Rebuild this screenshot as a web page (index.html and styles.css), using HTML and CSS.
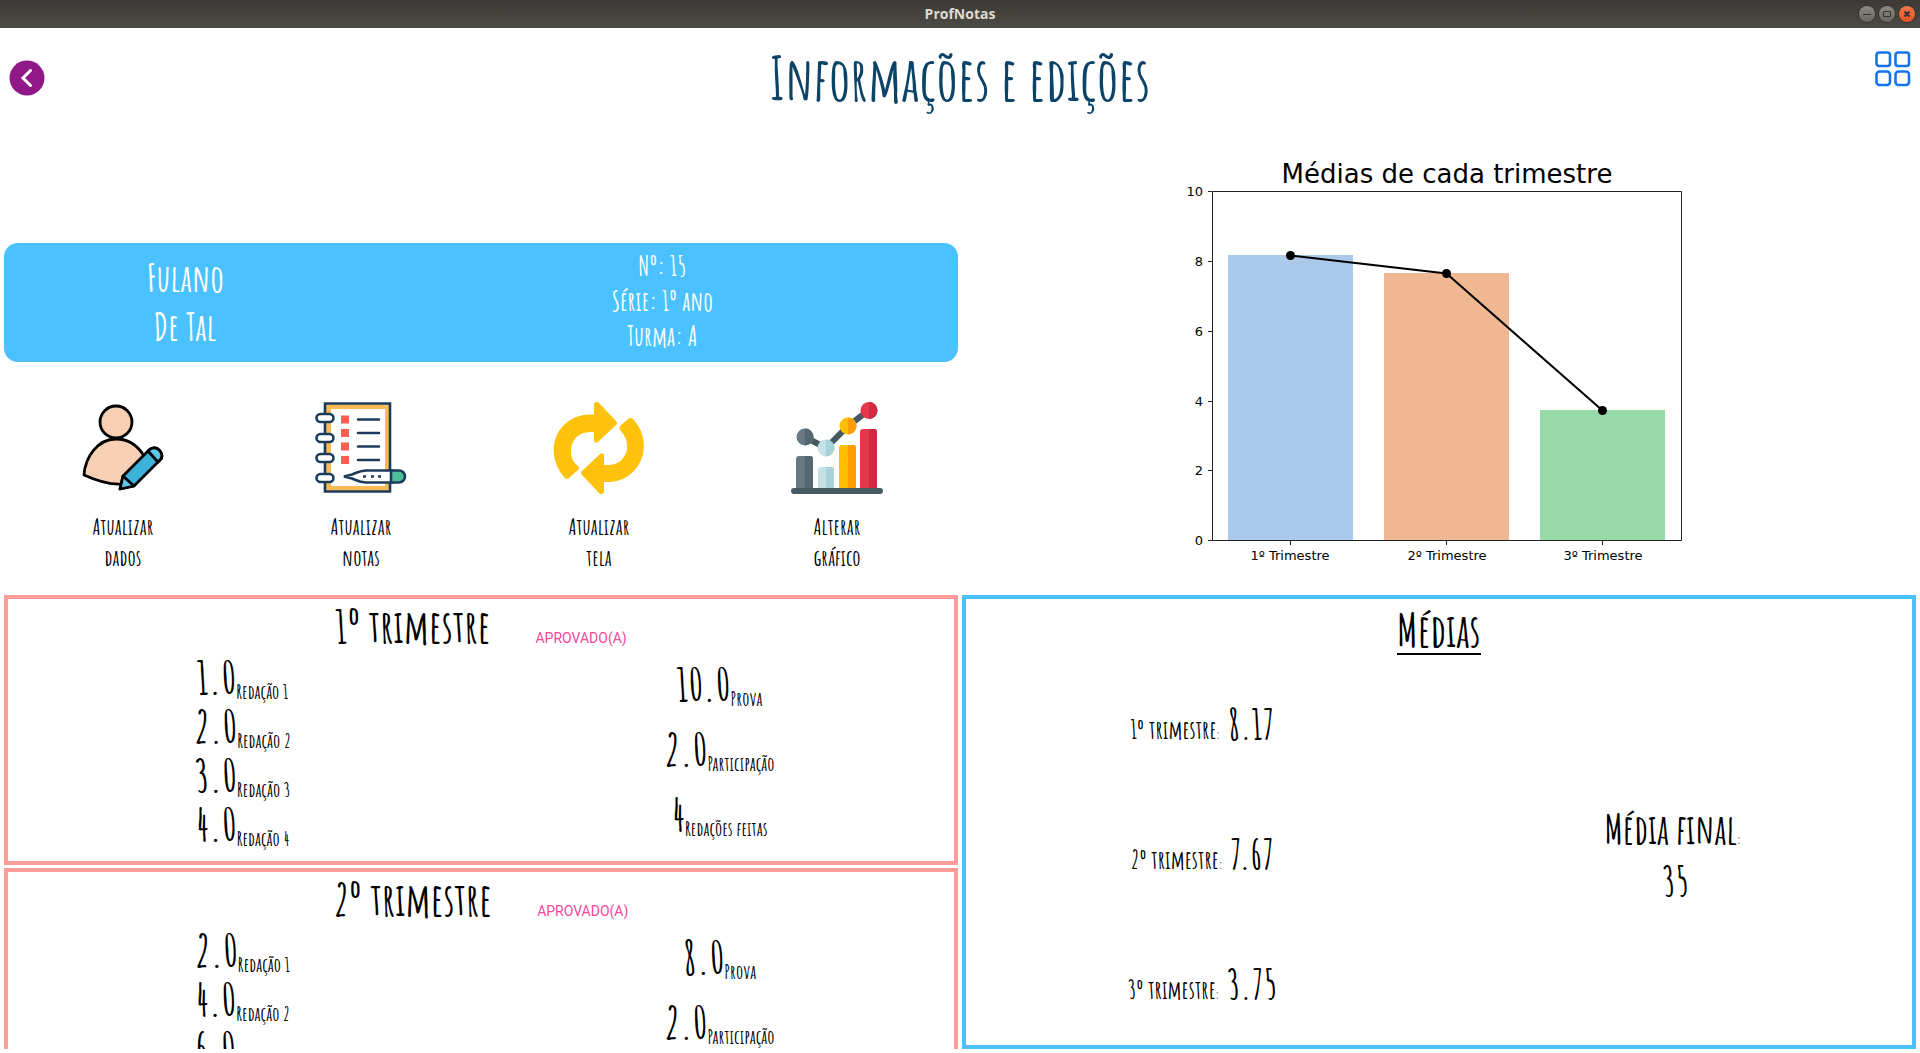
FILE: index.html
```
<!DOCTYPE html>
<html lang="pt-BR">
<head>
<meta charset="utf-8">
<title>ProfNotas</title>
<link rel="stylesheet" href="styles.css">
</head>
<body>
<div class="titlebar">
  <span class="titlebar-name">ProfNotas</span>
  <div class="window-buttons">
    <button class="window-button" aria-label="Minimizar"><svg viewBox="0 0 16 16"><path d="M4 8.500h8"/></svg></button>
    <button class="window-button" aria-label="Maximizar"><svg viewBox="0 0 16 16"><path d="M4.500 5.500h7v5h-7z"/></svg></button>
    <button class="window-button window-close" aria-label="Fechar"><svg viewBox="0 0 16 16"><path d="M5.500 5.500l5 5M10.500 5.500l-5 5"/></svg></button>
  </div>
</div>

<header class="header">
  <button class="icon-button" aria-label="Voltar">
    <svg class="back-icon" viewBox="0 0 36 36"><circle cx="18" cy="18" r="17.500" fill="#901889"/><path d="M21.500 10.500L14 18l7.500 7.500" fill="none" stroke="#fff" stroke-width="3" stroke-linecap="round"/></svg>
  </button>
  <h1 class="title">Informações e edições</h1>
  <button class="icon-button" aria-label="Menu">
    <svg class="grid-icon" viewBox="0 0 36 36" fill="none" stroke="#1673ee" stroke-width="2.600"><rect x="1.500" y="1.500" width="13.500" height="13.500" rx="2.500"/><rect x="20.500" y="1.500" width="13.500" height="13.500" rx="2.500"/><rect x="1.500" y="20.500" width="13.500" height="13.500" rx="3"/><rect x="20.500" y="20.500" width="13.500" height="13.500" rx="3"/></svg>
  </button>
</header>

<main class="main">
  <section class="student">
    <div class="card">
      <div class="card-name"><span>Fulano</span><span>De Tal</span></div>
      <div class="card-info"><span>Nº: 15</span><span>Série: 1º ano</span><span>Turma: A</span></div>
    </div>
    <nav class="actions">
      <button class="action">
        <svg class="action-icon" viewBox="0 0 92 92" stroke="#000" stroke-width="2.800" stroke-linejoin="round"><path d="M7 73C8 56 20 37 39 37c13 0 22 7 28 17L45 82C31 83 18 78 7 73z" fill="#f7cfb2"/><circle cx="39" cy="20" r="16" fill="#f7cfb2"/><path d="M46 74L72 48c3-3 8-3 11 1s2 7 0 9L57 84l-14 3z" fill="#3db2d9"/><path d="M72 48c3-3 8-3 11 1s2 7 0 9l-2 2-10-11zM46 74l-3 13 14-3z" fill="#62c5ea"/></svg>
        <span>Atualizar<br>dados</span>
      </button>
      <button class="action">
        <svg class="action-icon" viewBox="0 0 92 92" stroke="#1d3c5c" stroke-width="2.600"><path d="M10 1.500h65v88H10z" fill="#febb54"/><path d="M16 7h54v77H16z" fill="#fff" stroke="none"/><g fill="#fff"><rect x="1.500" y="12" width="17" height="8" rx="4"/><rect x="1.500" y="32" width="17" height="8" rx="4"/><rect x="1.500" y="52" width="17" height="8" rx="4"/><rect x="1.500" y="72" width="17" height="8" rx="4"/></g><path d="M26 13.500h8v8h-8zM26 27h8v8h-8zM26 40.500h8v8h-8zM26 54h8v8h-8z" fill="#f5604f" stroke="none"/><path d="M43 17.500h21M43 31h21M43 44.500h21M43 58h21" stroke-linecap="round"/><path d="M29 74.500l8-2c5-2 8-4 14-4h26v12H51c-6 0-9-2-14-4z" fill="#fff"/><path d="M76 68.500h8a6 6 0 0 1 0 12h-8z" fill="#4fbd9a"/><path d="M48 74.500h3M56 74.500h3M63 74.500h3"/></svg>
        <span>Atualizar<br>notas</span>
      </button>
      <button class="action">
        <svg class="action-icon" viewBox="0 0 92 92" fill="#ffc20c"><path d="M41 3c0-3 3-4 5-2l17 18q2 2 0 4L45 40q-4 2-4-2v-8h-4c-15 0-22 14-18 26q1 4 6 8 2 2 0 4l-9 8q-2 2-4 0C-11 51 3 13 37 12.500h4z"/><path d="M51 89c0 3-3 4-5 2L29 73q-2-2 0-4l18-17q4-2 4 2v9h5c14-1 21-13 17-26q-2-5-6-9-1-2 0-4l8-7q3-2 5 0c23 25 7 62-24 63h-5z"/></svg>
        <span>Atualizar<br>tela</span>
      </button>
      <button class="action">
        <svg class="action-icon" viewBox="0 0 92 92"><path d="M14 35l21 11L57 24 78 8" fill="none" stroke="#465a61" stroke-width="6"/><path d="M5 88V57q0-3 3-3h11q3 0 3 3v31z" fill="#677a84"/><path d="M14 54h5q3 0 3 3v31h-8z" fill="#566973"/><path d="M27 88V68q0-3 3-3h10q3 0 3 3v20z" fill="#c4e1e5"/><path d="M35 65h5q3 0 3 3v20h-8z" fill="#a8d2d9"/><path d="M48 88V46q0-3 3-3h11q3 0 3 3v42z" fill="#ffbe00"/><path d="M57 43h5q3 0 3 3v42h-8z" fill="#ff9c00"/><path d="M69 88V30q0-3 3-3h11q3 0 3 3v58z" fill="#e6374d"/><path d="M78 27h5q3 0 3 3v58h-8z" fill="#ce2c43"/><circle cx="14" cy="35" r="8.500" fill="#677a84"/><path d="M14 26.500a8.500 8.500 0 0 1 0 17z" fill="#566973"/><circle cx="35" cy="46" r="8.500" fill="#c4e1e5"/><path d="M35 37.500a8.500 8.500 0 0 1 0 17z" fill="#a8d2d9"/><circle cx="57" cy="24" r="8.500" fill="#ffbe00"/><path d="M57 15.500a8.500 8.500 0 0 1 0 17z" fill="#ff9c00"/><circle cx="78" cy="8.500" r="8.500" fill="#e6374d"/><path d="M78 0a8.500 8.500 0 0 1 0 17z" fill="#ce2c43"/><rect y="86" width="92" height="6" rx="3" fill="#465a61"/></svg>
        <span>Alterar<br>gráfico</span>
      </button>
    </nav>
  </section>

  <section class="chart">
    <svg class="chart-plot" width="604" height="453" viewBox="0 0 604 453" role="img" aria-label="Médias de cada trimestre">
      <text class="chart-title" x="310" y="46">Médias de cada trimestre</text>
      <rect x="91" y="118" width="125" height="286" fill="#abc9ea"/>
      <rect x="247" y="136" width="125" height="268" fill="#efb792"/>
      <rect x="403" y="273" width="125" height="131" fill="#98daa7"/>
      <path d="M75.500 54.500h469v349h-469z" fill="none" stroke="#222"/>
      <path d="M71 54.500h4M71 124.500h4M71 194.500h4M71 264.500h4M71 333.500h4M71 403.500h4M153.500 403v5M309.500 403v5M465.500 403v5" stroke="#222"/>
      <path d="M153.500 118.500L309.500 136.500 465.500 273.500" fill="none" stroke="#000" stroke-width="2"/>
      <circle cx="153.500" cy="118.500" r="4.500"/><circle cx="309.500" cy="136.500" r="4.500"/><circle cx="465.500" cy="273.500" r="4.500"/>
      <g class="chart-y"><text x="66" y="59">10</text><text x="66" y="129">8</text><text x="66" y="199">6</text><text x="66" y="269">4</text><text x="66" y="338">2</text><text x="66" y="408">0</text></g>
      <g class="chart-x"><text x="153" y="423">1º Trimestre</text><text x="310" y="423">2º Trimestre</text><text x="466" y="423">3º Trimestre</text></g>
    </svg>
  </section>

  <section class="terms">
    <article class="term">
      <div class="term-head"><h2>1º trimestre</h2><span class="status">APROVADO(A)</span></div>
      <div class="term-body">
        <ul class="scores">
          <li><b>1.0</b><span>Redação 1</span></li>
          <li><b>2.0</b><span>Redação 2</span></li>
          <li><b>3.0</b><span>Redação 3</span></li>
          <li><b>4.0</b><span>Redação 4</span></li>
        </ul>
        <ul class="scores scores-wide">
          <li><b>10.0</b><span>Prova</span></li>
          <li><b>2.0</b><span>Participação</span></li>
          <li><b>4</b><span>Redações feitas</span></li>
        </ul>
      </div>
    </article>
    <article class="term">
      <div class="term-head"><h2>2º trimestre</h2><span class="status">APROVADO(A)</span></div>
      <div class="term-body">
        <ul class="scores">
          <li><b>2.0</b><span>Redação 1</span></li>
          <li><b>4.0</b><span>Redação 2</span></li>
          <li><b>6.0</b><span>Redação 3</span></li>
        </ul>
        <ul class="scores scores-wide">
          <li><b>8.0</b><span>Prova</span></li>
          <li><b>2.0</b><span>Participação</span></li>
        </ul>
      </div>
    </article>
  </section>

  <section class="averages">
    <h2 class="averages-title">Médias</h2>
    <div class="averages-body">
      <ul class="averages-list">
        <li><b>1º trimestre</b><i>:</i><span>8.17</span></li>
        <li><b>2º trimestre</b><i>:</i><span>7.67</span></li>
        <li><b>3º trimestre</b><i>:</i><span>3.75</span></li>
      </ul>
      <div class="final"><div><b>Média final</b><i>:</i></div><span>35</span></div>
    </div>
  </section>
</main>
</body>
</html>
```
FILE: styles.css
```
* { box-sizing: border-box; }
body {
  margin: 0;
  height: 100vh;
  padding-bottom: 4px;
  display: flex;
  flex-direction: column;
  overflow: hidden;
  background: #fff;
  color: #000;
  font-family: "Amatic SC", "Roboto Condensed", sans-serif;
  font-weight: 700;
}
h1, h2, ul { margin: 0; padding: 0; }
ul { list-style: none; }
button { border: 0; padding: 0; background: none; color: inherit; font: inherit; cursor: pointer; }
svg { display: block; }

.titlebar {
  display: grid;
  grid-template-columns: 1fr auto 1fr;
  align-items: center;
  height: 28px;
  flex: none;
  padding: 0 5px;
  background: linear-gradient(#3a3935, #4d4b45);
}
.titlebar-name {
  grid-column: 2;
  color: #dfdbd2;
  font: 700 14px/20px "Open Sans", sans-serif;
}
.window-buttons { display: flex; justify-content: flex-end; gap: 4px; }
.window-button {
  width: 16px;
  height: 16px;
  border-radius: 50%;
  background: linear-gradient(#8b8981, #67655f);
  box-shadow: 0 0 0 1px #33322e;
}
.window-button path { fill: none; stroke: #33322e; stroke-width: 1; }
.window-close { background: linear-gradient(#f6764e, #e2521f); }
.window-close path { stroke-width: 2; }

.header {
  display: flex;
  align-items: center;
  justify-content: space-between;
  flex: none;
  height: 100px;
  padding: 0 9px;
}
.back-icon, .grid-icon { width: 36px; height: 36px; }
.grid-icon { margin-bottom: 18px; }
.title { color: #0b4468; font-size: 60px; line-height: 80px; font-weight: 700; }

.main {
  flex: 1;
  min-height: 0;
  display: grid;
  grid-template-columns: 1fr 1fr;
  grid-template-rows: auto 1fr;
  column-gap: 4px;
  row-gap: 5px;
  padding: 9px 4px 0;
}

.student { display: flex; flex-direction: column; justify-content: flex-end; padding-bottom: 17px; }
.card {
  display: grid;
  grid-template-columns: 38fr 62fr;
  align-items: center;
  padding: 6px 0 8px;
  border-radius: 14px;
  background: #4bc2ff;
  color: #fff;
  text-align: center;
}
.card span { display: block; }
.card-name { font-size: 38px; line-height: 49px; }
.card-info { font-size: 27px; line-height: 35px; }
.actions { display: grid; grid-template-columns: repeat(4, 1fr); margin: 40px 2px 0 0; }
.action {
  display: flex;
  flex-direction: column;
  align-items: center;
  gap: 17px;
  font-size: 23px;
  line-height: 31px;
}
.action-icon { width: 92px; height: 92px; }

.chart { display: flex; justify-content: center; }
.chart-plot { font-family: "DejaVu Sans", sans-serif; font-size: 13px; font-weight: 400; }
.chart-title { font-size: 26px; text-anchor: middle; }
.chart-y { text-anchor: end; }
.chart-x { text-anchor: middle; }

.terms { display: flex; flex-direction: column; gap: 3px; min-height: 0; overflow: hidden; }
.term { flex: none; min-height: 270px; border: 4px solid #ff9c9a; padding-bottom: 13px; }
.term-head { display: flex; justify-content: center; align-items: baseline; gap: 45px; }
.term-head h2 { font-size: 45px; line-height: 53px; }
.status { color: #f6489c; font: 14px/20px Roboto, sans-serif; }
.term-body { display: grid; grid-template-columns: 1fr 1fr; }
.scores { padding-right: 4px; }
.scores li { display: flex; justify-content: center; align-items: flex-end; height: 49px; }
.scores b { font-size: 45px; line-height: 49px; }
.scores span { font-size: 20px; line-height: 19px; }
.scores-wide { padding: 0 0 0 4px; }
.scores-wide li { height: 65px; align-items: flex-end; padding-bottom: 9px; }

.averages { display: flex; flex-direction: column; border: 4px solid #4bc2ff; }
.averages-title {
  align-self: center;
  margin-top: 8px;
  font-size: 45px;
  line-height: 46px;
  border-bottom: 2px solid #000;
}
.averages-body { flex: 1; display: grid; grid-template-columns: 1fr 1fr; align-items: center; }
.averages-list { display: flex; flex-direction: column; align-self: stretch; justify-content: space-around; }
.averages-list li { display: flex; justify-content: center; align-items: baseline; padding-top: 13px; line-height: 56px; }
.averages-list b { font-size: 25px; }
.averages i { color: #888; font: 13px Roboto, sans-serif; }
.averages-list span { font-size: 40px; margin-left: 8px; }
.final { padding-top: 9px; text-align: center; font-size: 40px; line-height: 52px; }
.final i { margin-right: 6px; }
```
